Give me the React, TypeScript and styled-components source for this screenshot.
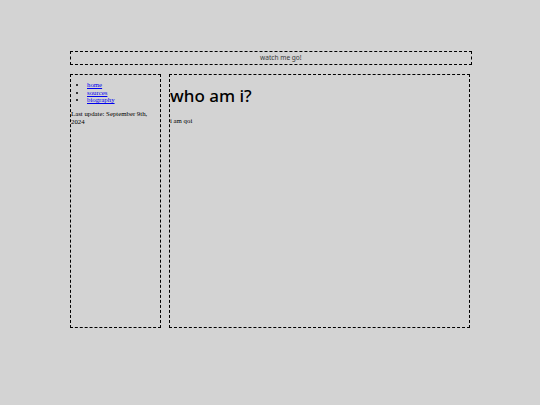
import React from 'react';
import styled, { createGlobalStyle } from 'styled-components';

const GlobalStyle = createGlobalStyle`
  html, body {
    margin: 0;
    background: #d3d3d3;
  }
  body {
    font-family: "Liberation Serif", "Times New Roman", serif;
    font-size: 6.8px;
    color: #000;
  }
`;

const Page = styled.div`
  width: 402px;
  padding: 51px 0 0 70px;
`;

const Marquee = styled.header`
  height: 12px;
  border: 1px dashed #000;
  font-family: "Noto Sans", "DejaVu Sans", sans-serif;
  font-size: 6.6px;
  line-height: 12px;
  color: #3a3a3a;
  white-space: nowrap;
  overflow: hidden;
  padding-left: 189px;
`;

const Columns = styled.div`
  margin-top: 9px;
  display: flex;
  gap: 8px;
  width: 400px;
`;

const Panel = styled.div<{ $width: number }>`
  width: ${(p) => p.$width}px;
  height: 252px;
  border: 1px dashed #000;
  flex-shrink: 0;
`;

const NavList = styled.ul`
  margin: 6px 0;
  padding-left: 16px;
  list-style: disc;
  line-height: 7.6px;

  a {
    color: #0000ee;
  }
`;

const Updated = styled.p`
  margin: 6.4px 0;
  line-height: 7.6px;
`;

const Title = styled.h1`
  margin: 11px 0;
  font-family: "Noto Sans", "DejaVu Sans", sans-serif;
  font-weight: 500;
  font-size: 17px;
  line-height: 20px;
`;

const Text = styled.p`
  margin: 6.4px 0;
`;

export default function App() {
  return (
    <>
      <GlobalStyle />
      <Page>
        <Marquee>watch me go!</Marquee>
        <Columns>
          <Panel $width={89}>
            <NavList>
              <li><a href="#">home</a></li>
              <li><a href="#">sources</a></li>
              <li><a href="#">biography</a></li>
            </NavList>
            <Updated>Last update: September 9th, 2024</Updated>
          </Panel>
          <Panel $width={299}>
            <Title>who am i?</Title>
            <Text>i am qoi</Text>
          </Panel>
        </Columns>
      </Page>
    </>
  );
}
